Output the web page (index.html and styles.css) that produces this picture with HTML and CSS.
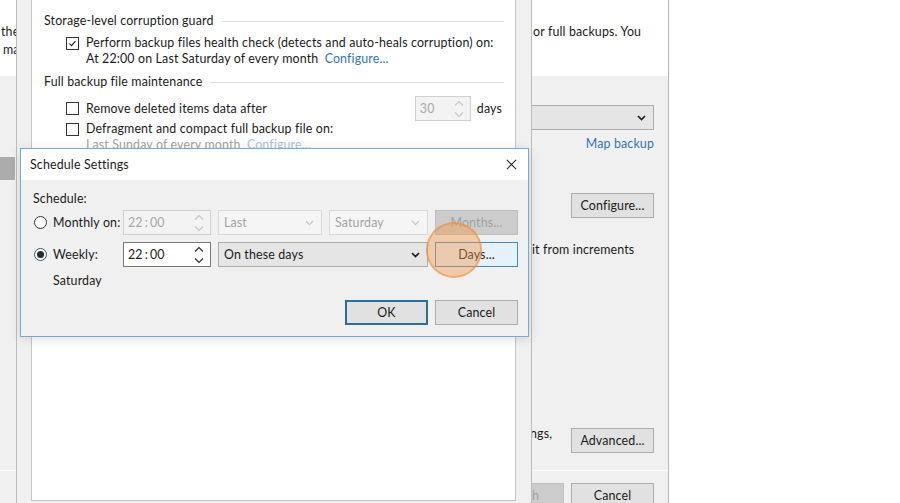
FILE: index.html
```html
<!DOCTYPE html>
<html lang="en">
<head>
<meta charset="utf-8">
<title>Schedule Settings</title>
<link rel="stylesheet" href="styles.css">
</head>
<body>
<div class="desk">

  <!-- job wizard window in the back -->
  <section class="win win-job">
    <header class="job-head">
      <div class="col-left">
        <div class="clip">the</div>
        <div class="clip ind">ma</div>
      </div>
      <div></div>
      <div class="col-right">
        <div class="head-text">or full backups. You</div>
      </div>
    </header>
    <div class="job-main">
      <div class="col-left"><div class="list-sel"></div></div>
      <div></div>
      <div class="col-right">
        <div class="combo job-combo"><span class="combo-val"></span><svg class="chev" viewBox="0 0 9 6"><path d="M1 1l3.5 3.5L8 1"/></svg></div>
        <a class="link map-link">Map backup</a>
        <button class="btn cfg-btn">Configure...</button>
        <div class="incr-text">it from increments</div>
        <div class="adv-row"><span class="adv-text">ngs,</span><button class="btn adv-btn">Advanced...</button></div>
      </div>
    </div>
    <footer class="job-foot">
      <div></div>
      <div></div>
      <div class="col-right foot-btns">
        <button class="btn btn-dis">Finish</button>
        <button class="btn">Cancel</button>
      </div>
    </footer>
  </section>

  <!-- maintenance options window -->
  <section class="win win-opts">
    <div class="panel">
      <div class="group"><span>Storage-level corruption guard</span><i class="rule"></i></div>
      <div class="opt opt-first">
        <span class="cb"><svg viewBox="0 0 13 13"><path d="M3 6.6l2.4 2.5L10 3.8"/></svg></span>
        <div class="opt-text">Perform backup files health check (detects and auto-heals corruption) on:<br>At 22:00 on Last Saturday of every month <a class="link cfg-link">Configure...</a></div>
      </div>
      <div class="group group-2"><span>Full backup file maintenance</span><i class="rule"></i></div>
      <div class="opt opt-spin">
        <span class="cb"></span>
        <span class="opt-grow">Remove deleted items data after</span>
        <div class="spin spin-dis spin-days">
          <span class="spin-val">30</span>
          <svg class="spin-arr" viewBox="0 0 10 18"><path d="M1 5.5L5 1.5l4 4M1 12.5l4 4 4-4"/></svg>
        </div>
        <span class="days">days</span>
      </div>
      <div class="opt">
        <span class="cb"></span>
        <div class="opt-text">Defragment and compact full backup file on:<br><span class="muted">Last Sunday of every month</span> <a class="link link-dis cfg-link">Configure...</a></div>
      </div>
    </div>
  </section>

  <!-- modal dialog -->
  <div class="dlg">
    <div class="dlg-title">
      <span>Schedule Settings</span>
      <svg class="close" viewBox="0 0 12 12"><path d="M1 1l10 10M11 1L1 11"/></svg>
    </div>
    <div class="dlg-body">
      <div class="lbl">Schedule:</div>
      <div class="sched">
        <label class="radio"><i class="rb"></i>Monthly on:</label>
        <div class="spin spin-dis">
          <span class="spin-val">22<span class="sep">:</span>00</span>
          <svg class="spin-arr" viewBox="0 0 10 18"><path d="M1 5.5L5 1.5l4 4M1 12.5l4 4 4-4"/></svg>
        </div>
        <div class="combo combo-dis"><span class="combo-val">Last</span><svg class="chev" viewBox="0 0 9 6"><path d="M1 1l3.5 3.5L8 1"/></svg></div>
        <div class="combo combo-dis"><span class="combo-val">Saturday</span><svg class="chev" viewBox="0 0 9 6"><path d="M1 1l3.5 3.5L8 1"/></svg></div>
        <button class="btn btn-dis">Months...</button>

        <label class="radio"><i class="rb rb-on"></i>Weekly:</label>
        <div class="spin">
          <span class="spin-val">22<span class="sep">:</span>00</span>
          <svg class="spin-arr" viewBox="0 0 10 18"><path d="M1 5.5L5 1.5l4 4M1 12.5l4 4 4-4"/></svg>
        </div>
        <div class="combo combo-wide"><span class="combo-val">On these days</span><svg class="chev" viewBox="0 0 9 6"><path d="M1 1l3.5 3.5L8 1"/></svg></div>
        <button class="btn btn-hover">Days...</button>
      </div>
      <div class="summary">Saturday</div>
      <div class="dlg-actions">
        <button class="btn btn-default">OK</button>
        <button class="btn">Cancel</button>
      </div>
    </div>
  </div>

  <!-- pointer click highlight -->
  <div class="click-ring"></div>
</div>
</body>
</html>
```

FILE: styles.css
```css
* { box-sizing: border-box; margin: 0; padding: 0; }

html, body {
  width: 900px;
  height: 503px;
  overflow: hidden;
  background: #fff;
}

body {
  font-family: Lato, "Segoe UI", "Liberation Sans", sans-serif;
  font-size: 12.4px;
  letter-spacing: 0.15px;
  line-height: 16px;
  color: #1b1b1b;
}

.desk {
  position: relative;
  width: 900px;
  height: 503px;
  overflow: hidden;
}

/* ---------- shared controls ---------- */

.btn {
  font: inherit;
  letter-spacing: inherit;
  color: #1b1b1b;
  height: 25px;
  width: 83px;
  background: #e1e1e1;
  border: 1px solid #adadad;
  text-align: center;
  flex: none;
}

.btn-dis {
  background: #cccccc;
  border-color: #bfbfbf;
  color: #a3a3a3;
}

.btn-hover {
  background: #e5f1fb;
  border-color: #3f8bc4;
}

.btn-default {
  border: 2px solid #2a6f98;
}

.link {
  color: #3474b4;
  text-decoration: none;
}

.link-dis { color: #a9c3dd; }

.muted { color: #a3a3a3; }

.combo {
  height: 25px;
  display: flex;
  align-items: center;
  justify-content: space-between;
  padding: 0 7px 0 5px;
  background: #e5e5e5;
  border: 1px solid #acacac;
}

.combo-dis {
  background: #f5f5f5;
  border-color: #d9d9d9;
  color: #a3a3a3;
}

.chev {
  width: 9px;
  height: 6px;
  fill: none;
  stroke: #1f1f1f;
  stroke-width: 1.7;
}

.combo-dis .chev {
  stroke: #c4c4c4;
  stroke-width: 1.1;
}

.spin {
  height: 25px;
  display: flex;
  align-items: center;
  justify-content: space-between;
  padding: 0 6px 0 4px;
  background: #fff;
  border: 1px solid #7a7a7a;
}

.spin-dis {
  background: #f3f3f3;
  border-color: #d0d0d0;
  color: #a8a8a8;
}

.sep { margin: 0 2px; }

.spin-arr {
  width: 10px;
  height: 18px;
  fill: none;
  stroke: #2a2a2a;
  stroke-width: 1.1;
}

.spin-dis .spin-arr { stroke: #c6c6c6; }

/* ---------- back window: job wizard ---------- */

.win {
  position: absolute;
  top: 0;
  background: #f0f0f0;
}

.win-job {
  left: 0;
  width: 669px;
  height: 520px;
  border-right: 1px solid #b8b8b8;
  display: flex;
  flex-direction: column;
}

.job-head,
.job-main,
.job-foot {
  display: grid;
  grid-template-columns: 16px 516px 1fr;
}

.col-right {
  padding-right: 14px;
  display: flex;
  flex-direction: column;
  min-width: 0;
}

.job-head {
  height: 76px;
  background: #fff;
  line-height: 18px;
  padding-top: 23px;
}

.clip {
  white-space: nowrap;
  overflow: hidden;
  padding-left: 1px;
}

.clip.ind { padding-left: 3px; }

.head-text { padding-left: 1px; white-space: nowrap; }

.job-main { height: 394px; }

.list-sel {
  margin-top: 81px;
  height: 23px;
  width: 15px;
  background: #acacac;
}

.job-combo {
  align-self: flex-end;
  width: 220px;
  margin-top: 29px;
  flex: none;
}

.map-link {
  align-self: flex-end;
  margin-top: 6px;
}

.cfg-btn {
  align-self: flex-end;
  margin-top: 41px;
}

.incr-text {
  margin-top: 24px;
  white-space: nowrap;
}

.adv-row {
  margin-top: 167px;
  display: flex;
  justify-content: space-between;
  align-items: flex-start;
}

.adv-text { margin: 1px 0 0 -2px; }

.adv-btn { margin-top: 3px; }

.job-foot {
  flex: 1;
  border-top: 1px solid #fbfbfb;
  padding-top: 12px;
}

.foot-btns {
  flex-direction: row;
  justify-content: flex-end;
  gap: 7px;
}

/* ---------- middle window: maintenance options ---------- */

.win-opts {
  left: 16px;
  width: 516px;
  height: 503px;
  border-left: 1px solid #bdbdbd;
  border-right: 1px solid #bdbdbd;
  padding: 0 15px 2px 14px;
}

.panel {
  height: 100%;
  background: #fff;
  border: 1px solid #c6c6c6;
  border-top: none;
  padding: 13px 11px 0 12px;
}

.group {
  display: flex;
  align-items: center;
  white-space: nowrap;
}

.group-2 { margin-top: 7px; }

.rule {
  flex: 1;
  height: 1px;
  margin-left: 8px;
  background: #dedede;
}

.opt {
  display: flex;
  align-items: flex-start;
  padding-left: 22px;
  white-space: nowrap;
}

.opt-first { margin-top: 6px; }

.cb {
  flex: none;
  width: 13px;
  height: 13px;
  margin: 2px 7px 0 0;
  border: 1px solid #333;
  background: #fff;
  display: flex;
}

.cb svg {
  width: 11px;
  height: 11px;
  fill: none;
  stroke: #1f1f1f;
  stroke-width: 1.3;
}

.cfg-link { margin-left: 3px; }

.opt-spin {
  margin-top: 6px;
  align-items: center;
}

.opt-spin .cb { margin-top: 0; }

.opt-grow { flex: 1; }

.spin-days { width: 56px; }

.days { margin: 0 2px 0 6px; }

/* ---------- modal dialog ---------- */

.dlg {
  position: absolute;
  left: 20px;
  top: 148px;
  width: 509px;
  height: 189px;
  background: #f0f0f0;
  border: 1px solid #77abcb;
  box-shadow: 0 2px 10px rgba(0, 0, 0, 0.12);
  display: flex;
  flex-direction: column;
}

.dlg-title {
  height: 31px;
  background: #fff;
  display: flex;
  align-items: center;
  justify-content: space-between;
  padding: 0 11px 0 9px;
}

.close {
  width: 11px;
  height: 11px;
  fill: none;
  stroke: #222;
  stroke-width: 1.1;
}

.dlg-body {
  flex: 1;
  padding: 11px 10px 11px 12px;
}

.sched {
  margin-top: 3px;
  display: grid;
  grid-template-columns: 83px 88px 104px 99px 83px;
  grid-auto-rows: 25px;
  column-gap: 7px;
  row-gap: 7px;
}

.radio {
  display: flex;
  align-items: center;
  gap: 6px;
  padding-left: 1px;
  white-space: nowrap;
}

.rb {
  flex: none;
  width: 13px;
  height: 13px;
  border: 1px solid #333;
  border-radius: 50%;
  background: #fff;
  display: flex;
  align-items: center;
  justify-content: center;
}

.rb-on { border-color: #2c5a78; }

.rb-on::after {
  content: "";
  width: 7px;
  height: 7px;
  border-radius: 50%;
  background: #2a2a2a;
}

.combo-wide { grid-column: span 2; }

.summary {
  margin-top: 6px;
  padding-left: 20px;
}

.dlg-actions {
  margin-top: 11px;
  display: flex;
  justify-content: flex-end;
  gap: 7px;
}

/* ---------- click highlight over the Days button ---------- */

.click-ring {
  position: absolute;
  left: 426px;
  top: 222px;
  width: 56px;
  height: 56px;
  border-radius: 50%;
  background: rgba(243, 150, 70, 0.42);
  border: 2px solid rgba(238, 140, 60, 0.55);
}
```
